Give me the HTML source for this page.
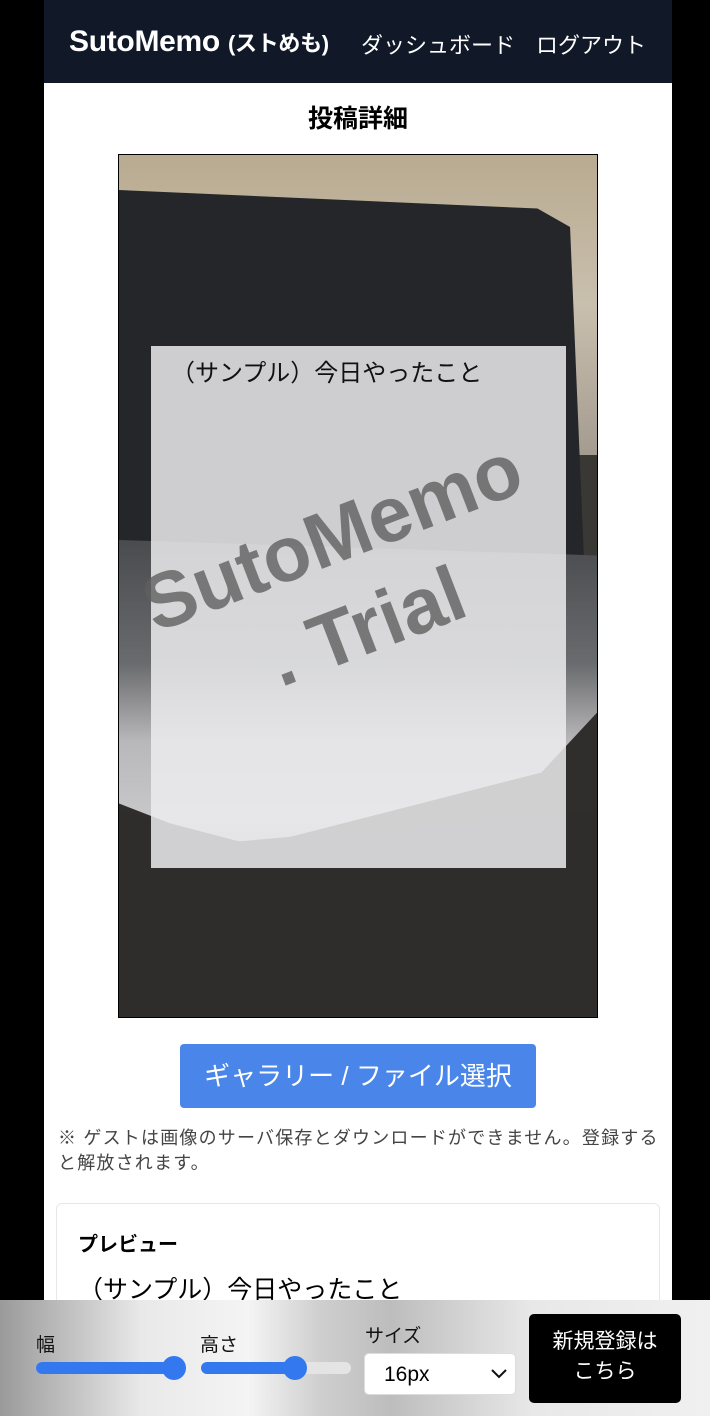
<!DOCTYPE html>
<html><head><meta charset="utf-8"><style>
*{margin:0;padding:0;box-sizing:border-box}
body{width:710px;height:1416px;background:#000;font-family:"Liberation Sans","Noto Sans CJK JP",sans-serif;position:relative;overflow:hidden}
.page{position:absolute;left:44px;top:0;width:628px;height:1416px;background:#fff}
.hdr{position:absolute;left:0;top:0;width:628px;height:83px;background:#111827;color:#fff}
.logo{position:absolute;left:25px;top:25px;font-size:30px;font-weight:bold;letter-spacing:-0.3px}
.logo small{font-size:22px}
.nav{position:absolute;top:28px;font-size:22px}
h1{position:absolute;top:99px;width:100%;text-align:center;font-size:25px;font-weight:bold}
.img{position:absolute;left:74px;top:154px;width:480px;height:864px;border:1px solid #000;overflow:hidden;background:#2f2e2c}
.img div{position:absolute}
.btn{position:absolute;left:136px;top:1044px;width:356px;height:64px;background:#4a86ea;border-radius:4px;color:#fff;font-size:26px;text-align:center;line-height:64px}
.note{position:absolute;left:14px;top:1126px;width:606px;font-size:18px;line-height:25px;color:#444;letter-spacing:1.2px}
.card{position:absolute;left:12px;top:1203px;width:604px;height:200px;border:1px solid #e5e7eb;border-radius:6px}
.bar{position:absolute;left:0;top:1300px;width:710px;height:116px;background:linear-gradient(90deg,#9a9a9a 0,#e9e9e9 20%,#f4f4f4 35%,#cfcfcf 45%,#bdbdbd 55%,#e8e8e8 75%,#f0f0f0 100%)}
.lbl{position:absolute;font-size:19px;color:#111}
.trk{position:absolute;height:12px;border-radius:6px;background:#e4e4e4}
.fill{position:absolute;left:0;top:0;height:12px;border-radius:6px;background:#3478f0}
.knob{position:absolute;top:-6px;width:24px;height:24px;border-radius:50%;background:#3478f0}
</style></head><body>
<div class="page">
<div class="hdr"><div class="logo">SutoMemo <small>(ストめも)</small></div>
<div class="nav" style="left:317px">ダッシュボード</div><div class="nav" style="left:492px">ログアウト</div></div>
<h1>投稿詳細</h1>
<div class="img">
<div style="left:0;top:0;width:480px;height:300px;background:linear-gradient(180deg,#b9ab90,#c9bfae 50%,#a49c90)"></div>
<div style="left:0;top:300px;width:480px;height:100px;background:#3a3835"></div>
<div style="left:0;top:35px;width:465px;height:370px;background:#24262a;clip-path:polygon(0 0,90% 5%,97% 10%,100% 100%,0 100%)"></div>
<div style="left:0;top:385px;width:480px;height:310px;background:linear-gradient(180deg,#4a4b4e,#6a6b6e 40%,#b8b8ba 65%,#c8c8ca 90%,#b0b0b2);clip-path:polygon(0 0,100% 5%,100% 55%,88% 75%,25% 100%,0 85%)"></div>
<div style="left:0;top:655px;width:480px;height:209px;background:#2e2d2c;clip-path:polygon(0 0,25% 15%,100% 0,100% 100%,0 100%)"></div>
<div style="left:32px;top:191px;width:415px;height:522px;background:rgba(236,236,238,0.85)"></div>
<div style="left:52px;top:198px;font-size:24px;color:#111">（サンプル）今日やったこと</div>
<div style="left:-20px;top:330px;width:500px;text-align:center;font-size:78px;font-weight:bold;color:rgba(95,95,95,0.8);transform:rotate(-21deg);line-height:96px">SutoMemo<br>. Trial</div>
</div>
<div class="btn">ギャラリー / ファイル選択</div>
<div class="note">※ ゲストは画像のサーバ保存とダウンロードができません。登録すると解放されます。</div>
<div class="card"><div style="position:absolute;left:21px;top:24px;font-size:20px;font-weight:bold">プレビュー</div>
<div style="position:absolute;left:21px;top:66px;font-size:25px">（サンプル）今日やったこと</div></div>
</div>
<div class="bar">
<div class="lbl" style="left:36px;top:30px">幅</div>
<div class="lbl" style="left:200px;top:30px">高さ</div>
<div class="lbl" style="left:365px;top:21px">サイズ</div>
<div class="trk" style="left:36px;top:62px;width:150px"><div class="fill" style="width:140px"></div><div class="knob" style="left:126px"></div></div>
<div class="trk" style="left:201px;top:62px;width:150px"><div class="fill" style="width:95px"></div><div class="knob" style="left:82px"></div></div>
<div style="position:absolute;left:364px;top:53px;width:152px;height:42px;background:#fff;border:1px solid #ddd;border-radius:5px;font-size:21px;line-height:42px;padding-left:19px">16px<svg style="position:absolute;right:8px;top:15px" width="16" height="10" viewBox="0 0 16 10"><path d="M1 1l7 7 7-7" fill="none" stroke="#111" stroke-width="2"/></svg></div>
<div style="position:absolute;left:529px;top:14px;width:152px;height:89px;background:#000;border-radius:5px;color:#fff;font-size:21px;text-align:center;line-height:30px;padding-top:13px">新規登録は<br>こちら</div>
</div>
</body></html>
